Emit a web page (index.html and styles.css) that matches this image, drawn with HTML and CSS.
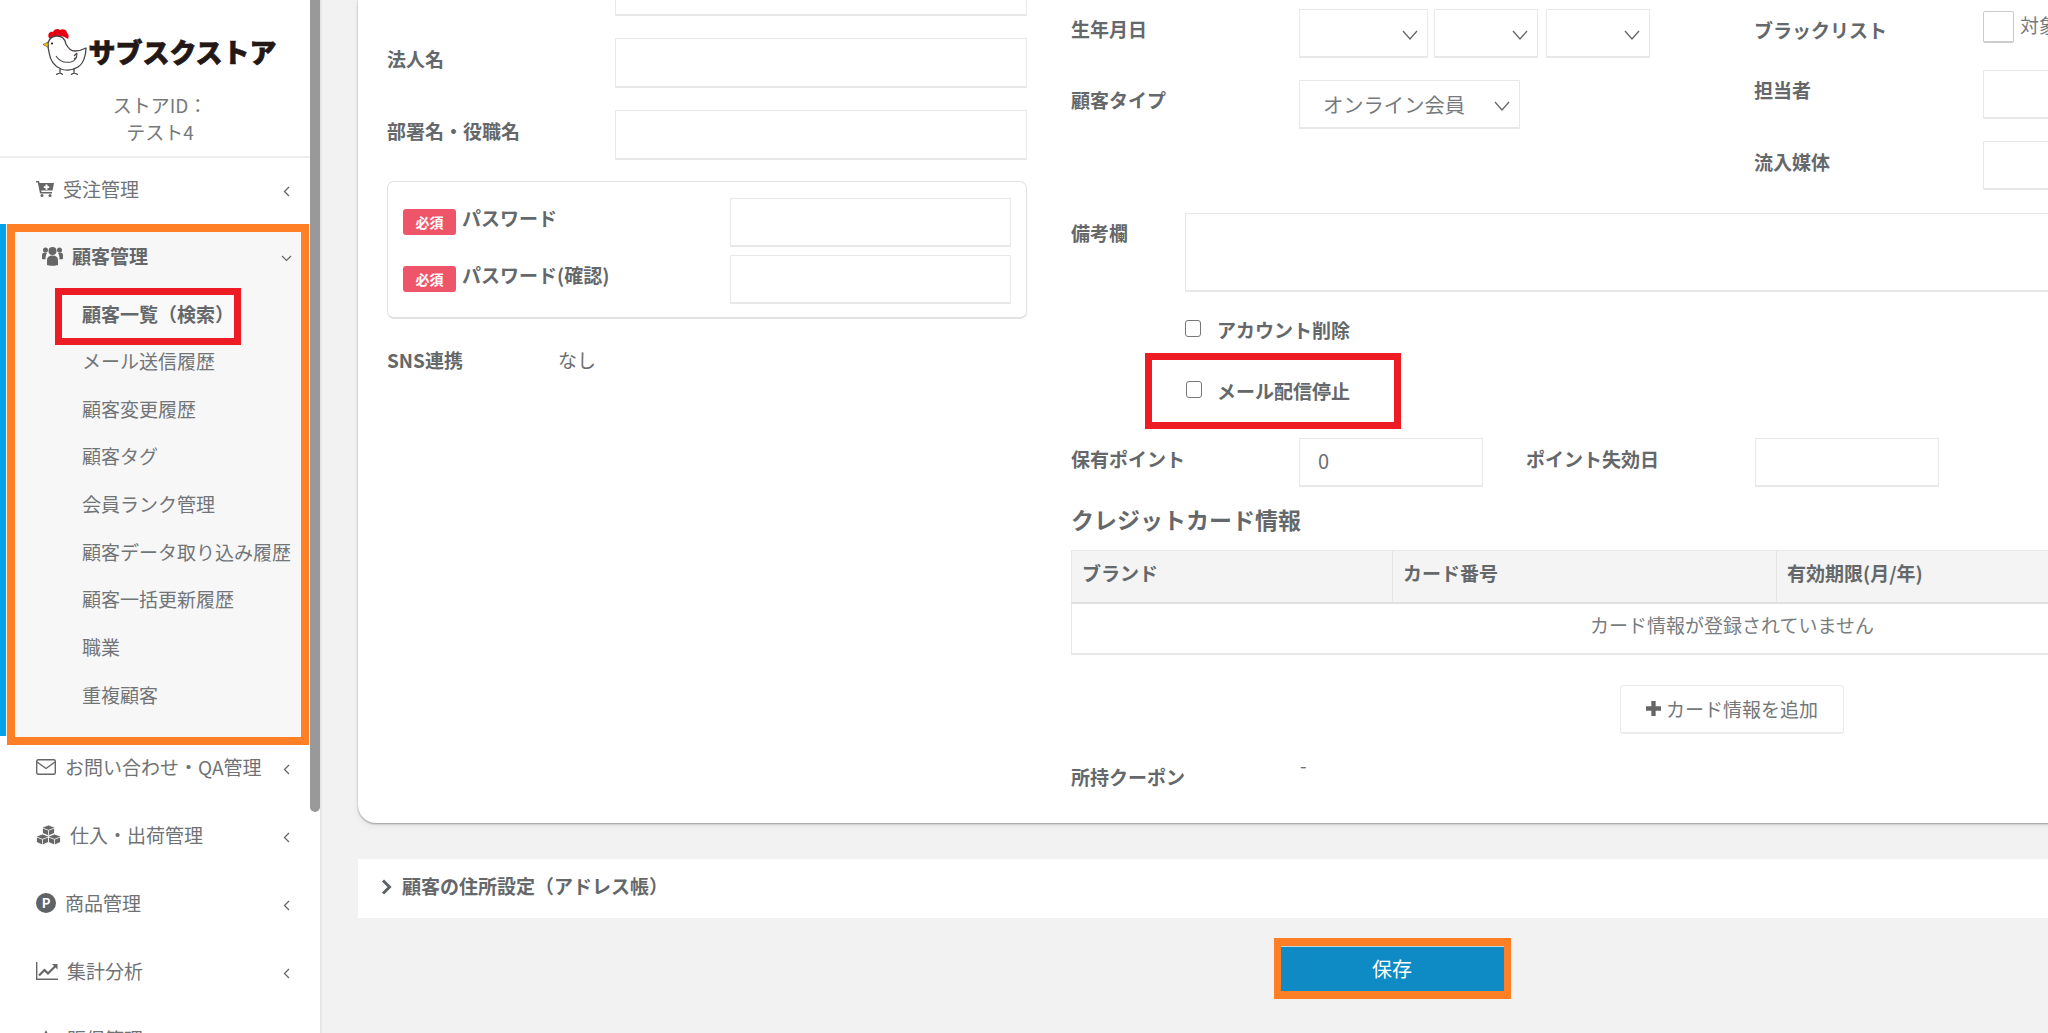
FILE: index.html
```html
<!DOCTYPE html>
<html lang="ja">
<head>
<meta charset="utf-8">
<title>顧客管理</title>
<link rel="stylesheet" href="styles.css">
</head>
<body>
<aside class="sidebar">
  <div class="scrollbar"></div>
  <div class="brand">
    <div class="logo">
      <svg class="chicken" viewBox="0 0 44 47" width="44" height="47">
        <path d="M6 10C4 6 7 3 10 4c1-3 5-4 7-2 3-2 7 0 7 3 2 1 2 4 1 6-4-3-9-4-13-2-2 1-4 2-6 1z" fill="#e60012"/>
        <path d="M5 15c1-4 4-7 9-7 5 0 8 3 9 8 2 4 5 7 9 7 4 0 7-1 11-3 0 8-3 16-8 19-5 3-12 4-17 2C11 38 7 32 6 24c-1-3-1-6-1-9z" fill="#fff" stroke="#4a4645" stroke-width="1.300" stroke-linejoin="round"/>
        <path d="M5 14L0 16.500l5 3z" fill="#f5c400" stroke="#4a4645" stroke-width=".6"/>
        <circle cx="9" cy="15.500" r="1.100" fill="#231815"/>
        <path d="M13 28c3 5 9 7 15 6 4-1 6-4 6-9M34 25l-3 3m3 1l-3 2" fill="none" stroke="#4a4645" stroke-width="1.100"/>
        <path d="M17 41v4m-4 1.500l4-1.500 3 1.500M31 40v5m-3 1.500l3-1.500 4 1.500" fill="none" stroke="#4a4645" stroke-width="1.300"/>
      </svg>
      <span class="logo-text">サブスクストア</span>
    </div>
    <p class="store-id">ストアID：<br>テスト4</p>
  </div>
  <nav>
    <a class="menu-item">
      <svg class="ic" width="18" height="16" viewBox="0 0 18 16"><path d="M0 0h3l.6 2H18l-1.500 7.500H5.200l.3 1.500H16v1.500H4L1.800 1.500H0z" fill="#666"/><path d="M9.500 3.500h2v1.700h1.700v1.800h-1.700v1.700h-2V7H7.800V5.200h1.700z" fill="#fff"/><circle cx="6" cy="14.500" r="1.500" fill="#666"/><circle cx="14" cy="14.500" r="1.500" fill="#666"/></svg>
      <span>受注管理</span><svg class="chev" width="7" height="11" viewBox="0 0 7 11"><path d="M6 1L1.500 5.500 6 10" fill="none" stroke="#666" stroke-width="1.300"/></svg>
    </a>
    <div class="active-wrap">
      <div class="blue-strip"></div>
      <div class="active-box">
        <div class="active-head">
          <svg class="ic" width="21" height="20" viewBox="0 0 21 20"><g fill="#666"><circle cx="10.500" cy="5" r="4"/><circle cx="3.500" cy="4" r="2.500"/><circle cx="17.500" cy="4" r="2.500"/><path d="M5 19v-5c0-3 2-4.500 5.500-4.500S16 11 16 14v5c-2 1-9 1-11 0z"/><path d="M0 13V9c0-1.500 1-2.500 3-2.500 1 0 1.500.3 2 .6C4 8.500 3.500 10 3.500 13.500z"/><path d="M21 13V9c0-1.500-1-2.500-3-2.500-1 0-1.500.3-2 .6 1 1.400 1.500 2.900 1.500 6.400z"/></g></svg>
          <span>顧客管理</span>
          <svg class="chev" width="11" height="7" viewBox="0 0 11 7"><path d="M1 1l4.500 4.500L10 1" fill="none" stroke="#666" stroke-width="1.200"/></svg>
        </div>
        <a class="sub-current">顧客一覧（検索）</a>
        <ul class="sub-list">
          <li>メール送信履歴</li>
          <li>顧客変更履歴</li>
          <li>顧客タグ</li>
          <li>会員ランク管理</li>
          <li>顧客データ取り込み履歴</li>
          <li>顧客一括更新履歴</li>
          <li>職業</li>
          <li>重複顧客</li>
        </ul>
      </div>
    </div>
    <a class="menu-item after-active">
      <svg class="ic" width="20" height="16" viewBox="0 0 20 16"><rect x=".7" y=".7" width="18.600" height="14.600" rx="1.500" fill="none" stroke="#666" stroke-width="1.400"/><path d="M1 3l9 6.500L19 3" fill="none" stroke="#666" stroke-width="1.400"/></svg>
      <span>お問い合わせ・QA管理</span><svg class="chev" width="7" height="11" viewBox="0 0 7 11"><path d="M6 1L1.500 5.500 6 10" fill="none" stroke="#666" stroke-width="1.300"/></svg>
    </a>
    <a class="menu-item">
      <svg class="ic" width="25" height="20" viewBox="0 0 25 20"><g fill="#666" stroke="#fff" stroke-width=".8"><path d="M12.500 0l6 2.300v6l-6 2.500-6-2.500v-6z"/><path d="M6.500 9l6 2.300v6l-6 2.700L.5 17.300v-6z"/><path d="M18.500 9l6 2.300v6l-6 2.700-6-2.700v-6z"/></g><path d="M6.500 3l6 2.300 6-2.300M.5 12l6 2.300 6-2.300 6 2.300 6-2.300M6.500 14.300V20M18.500 14.300V20M12.500 5.300v5" fill="none" stroke="#fff" stroke-width=".8"/></svg>
      <span>仕入・出荷管理</span><svg class="chev" width="7" height="11" viewBox="0 0 7 11"><path d="M6 1L1.500 5.500 6 10" fill="none" stroke="#666" stroke-width="1.300"/></svg>
    </a>
    <a class="menu-item">
      <span class="ic ic-p">P</span>
      <span>商品管理</span><svg class="chev" width="7" height="11" viewBox="0 0 7 11"><path d="M6 1L1.500 5.500 6 10" fill="none" stroke="#666" stroke-width="1.300"/></svg>
    </a>
    <a class="menu-item">
      <svg class="ic" width="22" height="18" viewBox="0 0 22 18"><path d="M.7 0v17.300H22" fill="none" stroke="#666" stroke-width="1.400"/><path d="M3 13.500l5.500-5.500 3.500 3.500L20 3.500" fill="none" stroke="#666" stroke-width="2.200"/><path d="M16 2h5.500v5.500z" fill="#666"/></svg>
      <span>集計分析</span><svg class="chev" width="7" height="11" viewBox="0 0 7 11"><path d="M6 1L1.500 5.500 6 10" fill="none" stroke="#666" stroke-width="1.300"/></svg>
    </a>
    <a class="menu-item">
      <svg class="ic" width="22" height="18" viewBox="0 0 22 18"><path d="M10 0l3 6 8 1-6 5 2 6H3l2-6-5-5 7-1z" fill="#666"/></svg>
      <span>販促管理</span>
    </a>
  </nav>
</aside>

<main class="main">
  <section class="panel">
    <div class="col-left">
      <div class="field"><label>&nbsp;</label><input class="grow" type="text"></div>
      <div class="field"><label>法人名</label><input class="grow" type="text"></div>
      <div class="field"><label>部署名・役職名</label><input class="grow" type="text"></div>
      <div class="pw-box">
        <div class="pw-row"><span class="badge">必須</span><label>パスワード</label><input class="pw-input" type="password"></div>
        <div class="pw-row"><span class="badge">必須</span><label>パスワード(確認)</label><input class="pw-input" type="password"></div>
      </div>
      <div class="sns-row"><label>SNS連携</label><span>なし</span></div>
    </div>

    <div class="col-right">
      <div class="top-grid">
        <div class="top-left">
          <div class="row">
            <label class="lab">生年月日</label>
            <div class="select s-year"><svg class="sel-chev" width="16" height="10" viewBox="0 0 16 10"><path d="M1 1l7 8 7-8" fill="none" stroke="#666" stroke-width="1.300"/></svg></div>
            <div class="select s-md"><svg class="sel-chev" width="16" height="10" viewBox="0 0 16 10"><path d="M1 1l7 8 7-8" fill="none" stroke="#666" stroke-width="1.300"/></svg></div>
            <div class="select s-md"><svg class="sel-chev" width="16" height="10" viewBox="0 0 16 10"><path d="M1 1l7 8 7-8" fill="none" stroke="#666" stroke-width="1.300"/></svg></div>
          </div>
          <div class="row">
            <label class="lab">顧客タイプ</label>
            <div class="select s-type"><span>オンライン会員</span><svg class="sel-chev" width="16" height="10" viewBox="0 0 16 10"><path d="M1 1l7 8 7-8" fill="none" stroke="#666" stroke-width="1.300"/></svg></div>
          </div>
        </div>
        <div class="top-right">
          <div class="row-black">
            <label class="lab lab-black">ブラックリスト</label>
            <input class="big-check" type="checkbox">
            <span class="check-note">対象</span>
          </div>
          <div class="row"><label class="lab lab-black">担当者</label><input class="wide" type="text"></div>
          <div class="row"><label class="lab lab-black lab-media">流入媒体</label><input class="wide" type="text"></div>
        </div>
      </div>

      <div class="memo-row"><label>備考欄</label><textarea></textarea></div>

      <div class="check-row"><input class="check" type="checkbox"><label>アカウント削除</label></div>
      <div class="check-row highlight"><input class="check" type="checkbox"><label>メール配信停止</label></div>

      <div class="row point-row">
        <label class="lab">保有ポイント</label>
        <input class="point" type="text" value="0">
        <label class="lab lab-exp">ポイント失効日</label>
        <input class="point" type="text">
      </div>

      <h2 class="card-title">クレジットカード情報</h2>
      <table class="card-table">
        <thead><tr><th class="c1">ブランド</th><th class="c2">カード番号</th><th>有効期限(月/年)</th></tr></thead>
        <tbody><tr><td colspan="3">カード情報が登録されていません</td></tr></tbody>
      </table>
      <div class="add-wrap"><button class="add-btn" type="button"><svg width="15" height="15" viewBox="0 0 14 14"><path d="M5 0h4v5h5v4H9v5H5V9H0V5h5z" fill="#666"/></svg>カード情報を追加</button></div>
      <div class="coupon"><label>所持クーポン</label><span>-</span></div>
    </div>
  </section>

  <div class="address-bar">
    <svg width="12" height="16" viewBox="0 0 12 16"><path d="M2 1.500L8.500 8 2 14.500" fill="none" stroke="#5f6366" stroke-width="3"/></svg>
    <span>顧客の住所設定（アドレス帳）</span>
  </div>

  <div class="save-wrap"><div class="save-frame"><button class="save-btn" type="button">保存</button></div></div>
</main>
</body>
</html>
```
FILE: styles.css
```css
* { box-sizing: border-box; }
html, body { margin: 0; height: 1033px; overflow: hidden; }
body {
  display: flex;
  width: 2048px;
  background: #f2f2f2;
  color: #6b6e71;
  font-family: "Noto Sans CJK JP", "Noto Sans", sans-serif;
  font-size: 19px;
  line-height: 28px;
}
input, textarea, button { font: inherit; color: inherit; outline: 0; }
label { font-weight: 700; color: #65686b; }

/* sidebar */
.sidebar {
  position: relative;
  flex: none;
  width: 322px;
  height: 1033px;
  overflow: hidden;
  background: #fff;
  border-right: 2px solid #e6e6e6;
}
.scrollbar {
  position: absolute;
  top: 0;
  left: 310px;
  width: 10px;
  height: 812px;
  background: #999;
  border-radius: 0 0 5px 5px;
  z-index: 2;
}
.brand {
  height: 158px;
  padding-top: 28px;
  border-bottom: 2px solid #eee;
  text-align: center;
}
.logo { display: flex; justify-content: center; align-items: center; height: 47px; }
.logo-text {
  margin-left: 1px;
  color: #231815;
  font-size: 27px;
  font-weight: 900;
  line-height: 47px;
  -webkit-text-stroke: .7px #231815;
}
.store-id { margin: 16px 0 0; line-height: 27px; color: #76797c; }
.menu-item {
  display: flex;
  align-items: center;
  height: 68px;
  padding: 0 30px 4px 36px;
  color: #6f7275;
}
.menu-item:first-child { height: 66px; }
.after-active { margin-top: -10px; }
.ic { flex: none; margin-right: 9px; }
.ic-p {
  width: 20px;
  height: 20px;
  border-radius: 50%;
  background: #5f6366;
  color: #fff;
  font-size: 13px;
  font-weight: 700;
  line-height: 20px;
  text-align: center;
}
.chev { flex: none; margin-left: auto; margin-top: 5px; }
.active-wrap { display: flex; align-items: flex-start; }
.blue-strip { flex: none; width: 6px; height: 512px; background: #00a2e8; }
.active-box {
  flex: none;
  width: 302px;
  height: 521px;
  margin-left: 1px;
  background: #f7f7f7;
  border: 8px solid #ff7f27;
  position: relative;
  z-index: 1;
}
.active-head {
  display: flex;
  align-items: center;
  height: 56px;
  padding: 0 9px 8px 27px;
  font-weight: 700;
  color: #65686b;
}
.active-head .chev { margin-top: 4px; }
.sub-current {
  display: block;
  width: 186px;
  height: 57px;
  margin-left: 40px;
  padding-left: 20px;
  border: 7px solid #ed1c24;
  background: #f9f9f9;
  font-weight: 700;
  line-height: 37px;
  color: #65686b;
  white-space: nowrap;
}
.sub-list { margin: -8px 0 0 67px; padding: 0; list-style: none; }
.sub-list li { height: 47.7px; line-height: 47.7px; white-space: nowrap; color: #727578; }

/* main */
.main { flex: none; width: 1726px; padding-left: 36px; overflow: hidden; height: 1033px; }
.panel {
  display: flex;
  width: 2068px;
  height: 823px;
  padding-left: 29px;
  background: #fff;
  border-radius: 0 0 0 18px;
  box-shadow: 0 1px 2px rgba(0, 0, 0, .35), 0 3px 6px rgba(0, 0, 0, .06);
}
input[type="text"], input[type="password"], textarea, .select {
  display: block;
  background: #fff;
  border: 1px solid #e8e8e8;
  border-bottom-width: 2px;
  border-radius: 1px;
}
.col-left { flex: none; width: 640px; margin-top: -34px; }
.field { display: flex; height: 50px; margin-bottom: 22px; }
.field label { flex: none; width: 228px; line-height: 42px; }
.grow { flex: 1; min-width: 0; }
.pw-box {
  height: 138px;
  margin-top: -1px;
  padding: 15px 15px 0 15px;
  border: 1px solid #e2e2e2;
  border-bottom-width: 2px;
  border-radius: 7px;
}
.pw-row { display: flex; align-items: center; height: 50px; margin-bottom: 7px; }
.pw-row label { flex: 1; margin-left: 6px; margin-top: -9px; }
.badge {
  flex: none;
  width: 53px;
  height: 26px;
  background: #ef5568;
  border-radius: 3px;
  color: #fff;
  font-size: 14px;
  font-weight: 700;
  line-height: 26px;
  text-align: center;
}
.pw-input { flex: none; width: 281px; height: 49px; }
.sns-row { display: flex; height: 28px; margin-top: 27px; }
.sns-row label { flex: none; width: 171px; }

.col-right { flex: none; width: 1322px; margin-left: 44px; padding-top: 9px; }
.top-grid { display: flex; height: 204px; }
.top-left { flex: none; width: 683px; }
.row { display: flex; height: 49px; margin-bottom: 22px; }
.lab { flex: none; width: 228px; line-height: 40px; }
.select { position: relative; flex: none; height: 49px; margin-right: 6px; }
.s-year { width: 129px; }
.s-md { width: 104px; margin-right: 8px; }
.s-type {
  display: flex;
  align-items: center;
  width: 221px;
  padding-left: 23px;
  font-size: 20.300px;
  color: #777a7d;
  line-height: 46px;
}
.sel-chev { position: absolute; right: 9px; top: 20px; }
.top-right { flex: none; width: 600px; }
.lab-black { width: 229px; }
.row-black { display: flex; height: 34px; margin: 2px 0 25px; }
.row-black .lab { line-height: 38px; }
.lab-media { line-height: 42px; }
.big-check {
  appearance: none;
  flex: none;
  width: 31px;
  height: 32px;
  margin: 0;
  border: 1px solid #ccc;
  border-bottom-width: 2px;
  border-radius: 2px;
  background: #fff;
}
.check-note { margin-left: 6px; line-height: 28px; font-weight: 400; color: #777a7d; }
.wide { flex: none; width: 300px; height: 49px; }

.memo-row { display: flex; height: 79px; }
.memo-row label { flex: none; width: 114px; line-height: 40px; }
.memo-row textarea { flex: none; width: 1150px; height: 79px; resize: none; }

.check-row { display: flex; align-items: center; height: 30px; margin: 23px 0 0 114px; }
.check-row label { margin-left: 16px; }
.check {
  appearance: none;
  flex: none;
  width: 16px;
  height: 17px;
  margin: -3px 0 0 0;
  background: #fff;
  border: 1.500px solid #777;
  border-radius: 3px;
}
.highlight {
  width: 256px;
  height: 76px;
  margin: 8px 0 0 74px;
  padding-left: 34px;
  border: 7px solid #ed1c24;
}
.highlight label { margin-left: 15px; }
.point-row { margin: 9px 0 0; }
.point-row .lab { line-height: 41px; }
.point { flex: none; width: 184px; height: 49px; padding: 0 0 3px 18px; font-size: 20px; }
.lab-exp { width: 229px; margin-left: 43px; }
.card-title {
  margin: 17px 0 0;
  font-size: 23px;
  font-weight: 700;
  line-height: 30px;
  color: #65686b;
}
.card-table {
  width: 1322px;
  margin-top: 16px;
  border-collapse: collapse;
  table-layout: fixed;
  border: 1px solid #e8e8e8;
  border-bottom-width: 2px;
}
.card-table th {
  height: 52px;
  padding: 0 0 6px 10px;
  background: #f4f4f4;
  border-right: 1px solid #e6e6e6;
  border-bottom: 2px solid #e0e0e0;
  font-weight: 700;
  color: #65686b;
  text-align: left;
}
.card-table .c1 { width: 321px; }
.card-table .c2 { width: 384px; }
.card-table td { height: 51px; padding: 0 0 6px; text-align: center; color: #7a7d80; }
.add-wrap { display: flex; justify-content: center; margin-top: 30px; }
.add-btn {
  display: flex;
  align-items: center;
  justify-content: center;
  gap: 5px;
  width: 224px;
  height: 49px;
  padding: 0;
  background: #fff;
  border: 1px solid #ebebeb;
  border-bottom-width: 2px;
  border-radius: 4px;
  color: #74777a;
}
.coupon { display: flex; margin-top: 23px; }
.coupon label { flex: none; width: 229px; margin-top: 6px; }
.coupon span { margin-top: -2px; line-height: 20px; }

.address-bar {
  display: flex;
  align-items: center;
  gap: 9px;
  width: 2068px;
  height: 59px;
  margin-top: 36px;
  padding: 0 0 6px 23px;
  background: #fff;
  font-weight: 700;
  color: #65686b;
}
.address-bar svg { margin-top: 3px; }
.save-wrap { display: flex; justify-content: center; width: 2068px; margin-top: 20px; }
.save-frame { width: 237px; height: 61px; padding: 8px 7px; background: #ff7f27; }
.save-btn {
  display: block;
  width: 100%;
  height: 100%;
  padding: 0;
  border: 0;
  border-top: 1px solid #c9d4d9;
  background: #0e8ac4;
  color: #fff;
  font-size: 20px;
  line-height: 28px;
}
```
